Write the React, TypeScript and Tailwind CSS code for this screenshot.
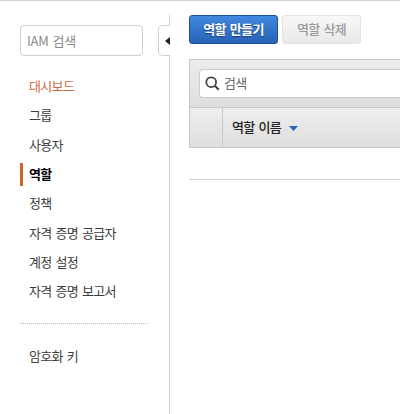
const links = [
  { label: '대시보드', tone: 'text-[#cf6a45]' },
  { label: '그룹' },
  { label: '사용자' },
  { label: '역할', active: true },
  { label: '정책' },
  { label: '자격 증명 공급자' },
  { label: '계정 설정' },
  { label: '자격 증명 보고서' },
];

function Sidebar() {
  return (
    <aside className="w-[158px] shrink-0 pl-5 pt-6">
      <input
        placeholder="IAM 검색"
        className="block h-[31px] w-[123px] rounded-[4px] border border-[#cfcfcf] bg-white px-1.5 pb-px text-[13px] tracking-[-0.2px] outline-none [word-spacing:1.2px] placeholder:text-[#8a8a8a]"
      />
      <nav className="mt-[15.5px] flex flex-col">
        {links.map((l) => (
          <a key={l.label} className="flex h-[29.35px] items-center">
            <span
              className={`flex h-[23px] items-center border-l-[3px] pb-px pl-[6px] ${
                l.active ? 'border-[#cc6628] font-bold text-black' : `border-transparent ${l.tone ?? 'text-[#3c3c3c]'}`
              }`}
            >
              {l.label}
            </span>
          </a>
        ))}
      </nav>
      <div className="mt-[17px] w-[128px] border-t border-dotted border-[#bdbdbd]" />
      <a className="mt-5 flex h-6 items-center pb-px pl-[9px] text-[#3c3c3c]">암호화 키</a>
    </aside>
  );
}

function CollapseRail() {
  return (
    <div className="flex w-3 shrink-0 flex-col pt-[14px]">
      <div className="h-[10px] border-r border-[#d0d0d0]" />
      <button className="flex h-[31px] items-center justify-end rounded-l-[5px] border border-r-0 border-[#d0d0d0]">
        <svg width="5" height="8" viewBox="0 0 5 8">
          <path d="M5 0v8L0 4z" fill="#222" />
        </svg>
      </button>
      <div className="grow border-r border-[#d0d0d0]" />
    </div>
  );
}

export default function App() {
  return (
    <div className="flex h-[414px] w-[400px] flex-col overflow-hidden whitespace-nowrap border-t border-[#d0d0d0] bg-white font-['Noto_Sans_CJK_KR',sans-serif] text-[13px] tracking-[-0.65px] [word-spacing:1.6px]">
      <div className="flex grow">
        <Sidebar />
        <CollapseRail />
        <main className="w-[230px] pl-[19px] pt-[14px]">
          <div className="flex gap-1">
            <button className="h-[29px] w-[89px] rounded-[3px] border border-[#1b4f9f] bg-linear-to-b from-[#4088e0] to-[#2862b4] pb-px font-bold text-white [text-shadow:0_1px_1px_#173f7c] [word-spacing:1.6px]">
              역할 만들기
            </button>
            <button className="h-[29px] w-[79px] rounded-[3px] border border-[#e3e3e3] bg-linear-to-b from-[#f8f8f8] to-[#e9e9e9] pb-px font-medium text-[#999] [word-spacing:1.6px]">
              역할 삭제
            </button>
          </div>
          <section className="mt-[15px] w-[211px] border-l border-t border-[#c9c9c9]">
            <div className="h-[47px] bg-linear-to-b from-[#ececec] to-[#dedede] pl-[9px] pt-[9px]">
              <div className="flex h-[29px] items-center gap-1 rounded-l-[4px] border border-r-0 border-[#cccccc] bg-white pb-px pl-[5px] text-[#666]">
                <svg width="15" height="15" viewBox="0 0 15 15" fill="none" stroke="#444">
                  <circle cx="6.2" cy="6.2" r="4.9" strokeWidth="1.8" />
                  <path d="M9.8 9.8l4 4" strokeWidth="2.2" />
                </svg>
                검색
              </div>
            </div>
            <div className="flex h-[41px] border-b border-t border-[#c9c9c9] bg-linear-to-b from-[#eeeeee] to-[#dedede]">
              <div className="w-[33px] border-r border-[#c9c9c9]" />
              <div className="flex items-center gap-2 pb-px pl-[9px] font-medium text-[#222]">
                역할 이름
                <svg className="mt-[3px]" width="9" height="5" viewBox="0 0 9 5">
                  <path d="M0 0h9L4.5 5z" fill="#2266bb" />
                </svg>
              </div>
            </div>
          </section>
          <div className="mt-[31px] border-t border-[#d0d0d0]" />
        </main>
      </div>
    </div>
  );
}
